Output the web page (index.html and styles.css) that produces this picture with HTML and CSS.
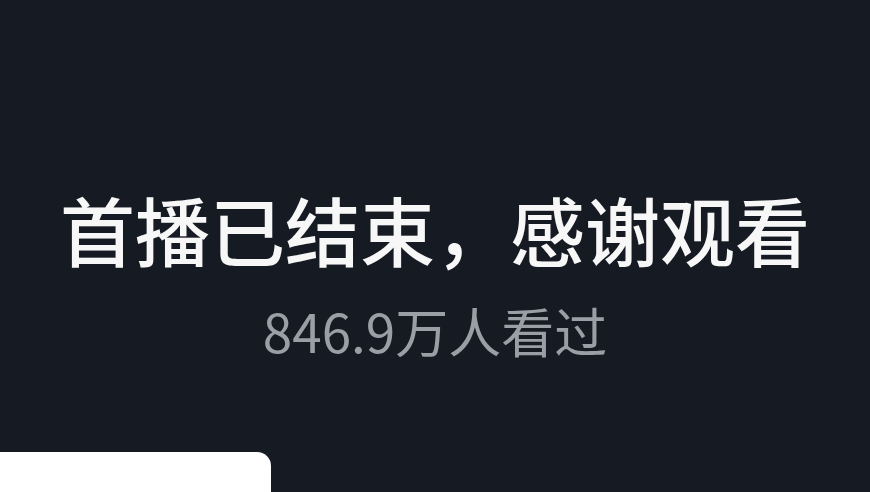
FILE: index.html
```html
<!DOCTYPE html>
<html lang="zh-CN">
<head>
<meta charset="utf-8">
<title>首播已结束</title>
<link rel="stylesheet" href="styles.css">
</head>
<body>
<div class="screen">
  <div class="end-info">
    <h1 class="end-title">首播已结束，感谢观看</h1>
    <p class="end-views">846.9万人看过</p>
  </div>
  <div class="bottom-card"></div>
</div>
</body>
</html>
```

FILE: styles.css
```css
html, body {
  margin: 0;
  padding: 0;
  background: #161a22;
}
.screen {
  width: 870px;
  height: 492px;
  overflow: hidden;
  display: flex;
  flex-direction: column;
  background: #161a22;
  font-family: "Noto Sans CJK SC", "Noto Sans", sans-serif;
}
.end-info {
  padding-top: 189px;
  display: flex;
  flex-direction: column;
  align-items: center;
}
.end-title {
  margin: 0;
  font-size: 75px;
  line-height: 80px;
  font-weight: 500;
  color: #f7f7f8;
  white-space: nowrap;
}
.end-views {
  margin: 33px 0 0;
  font-size: 53px;
  line-height: 56px;
  font-weight: 400;
  color: #9c9ea5;
  white-space: nowrap;
}
.bottom-card {
  margin-top: auto;
  width: 271px;
  height: 40px;
  background: #ffffff;
  border-top-right-radius: 14px;
}
```
